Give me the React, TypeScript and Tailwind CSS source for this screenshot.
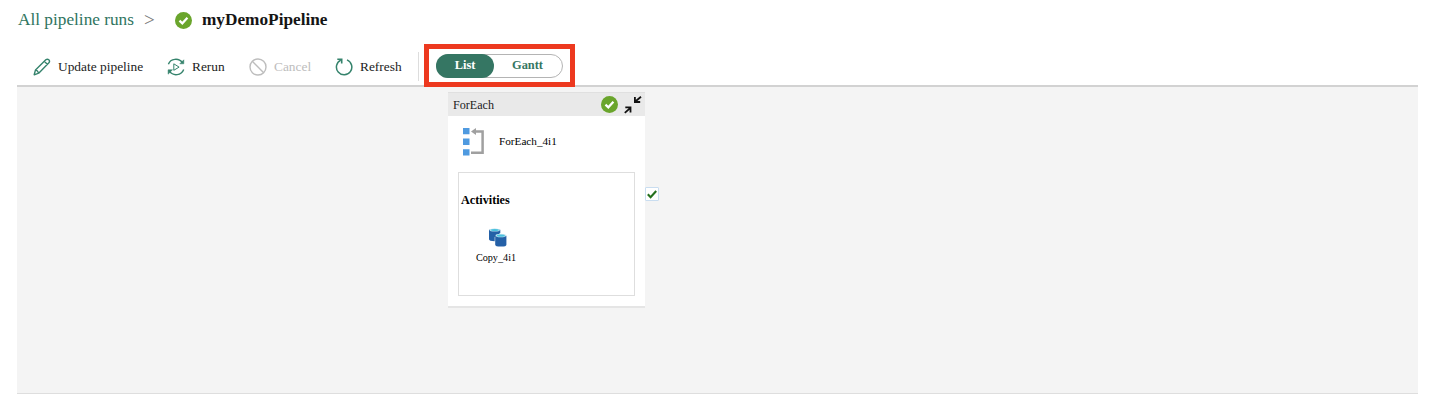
import type { ReactNode } from 'react';

function SuccessBadge({ size }: { size: number }) {
  return (
    <svg width={size} height={size} viewBox="0 0 16 16" className="shrink-0">
      <circle cx="8" cy="8" r="8" fill="#6aa52c" />
      <path d="M4.2 8.1l2.7 2.6 4.8-5.2" fill="none" stroke="#fff" strokeWidth="2.1" />
    </svg>
  );
}

function PencilIcon() {
  return (
    <svg width="18" height="18" viewBox="0 0 18 18" fill="none" stroke="#35836c" strokeWidth="1.4" strokeLinejoin="round">
      <path d="M1.2 16.8l1.3-4.9L12.8 1.8q1.6-1.3 3 0t.1 3L5.7 15.2zM2.5 11.9q2.3.5 3.2 3.3M11.3 3.3l3.2 3.1" />
    </svg>
  );
}

function RerunIcon() {
  return (
    <svg width="18" height="18" viewBox="0 0 18 18" fill="none" stroke="#35836c" strokeWidth="1.4">
      <path d="M1.4 6.2C3.5.4 11.8-.5 15.4 4.7M16.7 11.5C14.5 17.4 6.2 18.6 2.5 13.2" />
      <path d="M16.8 1.8v4h-4zM1.1 16.2v-4.4h4.4z" fill="#35836c" strokeWidth=".5" />
      <path d="M6.8 5.8v6.5l5.3-3.2z" strokeWidth="1" />
    </svg>
  );
}

function CancelIcon() {
  return (
    <svg width="18" height="18" viewBox="0 0 18 18" fill="none" stroke="#bdbdbd" strokeWidth="1.4">
      <circle cx="9" cy="9" r="8" />
      <path d="M3.3 3.3l11.4 11.4" />
    </svg>
  );
}

function RefreshIcon() {
  return (
    <svg width="18" height="18" viewBox="0 0 18 18" fill="none" stroke="#35836c" strokeWidth="1.5">
      <path d="M5.8 2.1A7.7 7.7 0 1 0 12 1.9" />
      <path d="M2.3 1.2h4.4v4.3" strokeWidth="1.6" />
    </svg>
  );
}

function CollapseIcon() {
  return (
    <svg width="18" height="18" viewBox="0 0 18 18" fill="none" stroke="#111" strokeWidth="1.8">
      <path d="M17 .7l-6 5M10.9 1v5h5.3M.8 16.8l5.6-5M1.3 11.4h5.2v5" />
    </svg>
  );
}

function ForEachIcon() {
  return (
    <svg width="21" height="28" viewBox="0 0 21 28">
      <path d="M0 0h6.5v6.3H0zM0 10.6h6.5v6.3H0zM0 21.3h6.5v6.3H0z" fill="#4f9ae0" />
      <path d="M11 3.5h8.6v21.2H8" fill="none" stroke="#a0a0a0" strokeWidth="2.5" />
      <path d="M8 3.5L13 0v7z" fill="#a0a0a0" />
    </svg>
  );
}

function CopyDataIcon() {
  return (
    <svg width="18" height="19" viewBox="0 0 18 19" className="ml-1">
      <path d="M0 1.8v9.5q0 1.8 5.7 1.9V9l5.6-4V1.8z" fill="#2460a7" />
      <ellipse cx="5.7" cy="1.9" rx="5.2" ry="1.5" fill="#b4deea" />
      <ellipse cx="5.8" cy="2" rx="3.8" ry="1" fill="#4bc1df" />
      <path d="M6.2 7.7v9q0 1.8 5.6 1.9t5.6-1.9v-9z" fill="#2460a7" />
      <ellipse cx="11.8" cy="7.5" rx="5.3" ry="1.8" fill="#c6e5ef" />
      <ellipse cx="11.8" cy="7.7" rx="4" ry="1.1" fill="#4bc1df" />
    </svg>
  );
}

function ToolButton({ icon, label, className }: { icon: ReactNode; label: string; className: string }) {
  return (
    <button className={`flex h-full shrink-0 items-center text-[13.4px] whitespace-nowrap ${className}`}>
      {icon}
      <span className="ml-[7px] leading-5">{label}</span>
    </button>
  );
}

export default function App() {
  return (
    <main className="h-[400px] w-[1434px] overflow-hidden bg-white font-['Liberation_Serif',serif] text-[#222]">
      <header className="flex h-10 items-center pl-[18px] text-[17.25px] leading-5">
        <a className="w-[126px] whitespace-nowrap text-[#30755f]">All pipeline runs</a>
        <span className="w-[10px] text-[19px] text-[#777]">&gt;</span>
        <span className="mr-[10px] ml-[21px]"><SuccessBadge size={17} /></span>
        <h1 className="font-bold text-[#151515]">myDemoPipeline</h1>
      </header>

      <div className="mx-[17px] flex h-[45px] items-start">
        <div className="flex h-[45px] w-[401px] items-center pt-2 pl-4">
          <ToolButton icon={<PencilIcon />} label="Update pipeline" className="w-[134px]" />
          <ToolButton icon={<RerunIcon />} label="Rerun" className="w-[82px]" />
          <ToolButton icon={<CancelIcon />} label="Cancel" className="w-[86px] text-[#bdbdbd]" />
          <ToolButton icon={<RefreshIcon />} label="Refresh" className="w-[70px]" />
        </div>
        <div className="mt-3 h-[29px] w-px bg-[#ddd]" />
        <div className="relative z-10 mt-1 ml-[5px] flex h-[43px] w-[151px] items-center justify-center border-[5px] border-[#ed391f] bg-white">
          <div className="flex h-6 w-[127px] rounded-full border border-[#b4b4b4] text-[12.4px] leading-[21px] font-bold">
            <button className="-my-px -ml-px h-6 w-[58px] rounded-full bg-[#357663] pb-px text-white">List</button>
            <button className="ml-[18px] h-[22px] text-[#357663]">Gantt</button>
          </div>
        </div>
      </div>

      <section className="mr-4 ml-[17px] flex h-[309px] items-start border-t-2 border-b border-t-[#d2d2d2] border-b-[#dedede] bg-[#f4f4f4] pt-[5px] pl-[431px]">
        <article className="h-[216px] w-[197px] shrink-0 border-b-2 border-[#e5e5e5] bg-white text-black">
          <div className="flex h-6 items-center border-t border-[#e0e0e0] bg-[#e9e9e9] pl-[5px] text-[12.1px] leading-4">
            <span className="w-[148px] text-[#222]">ForEach</span>
            <SuccessBadge size={17} />
            <span className="ml-[6px]"><CollapseIcon /></span>
          </div>
          <div className="flex h-[56px] items-start pt-3 pl-[15px]">
            <ForEachIcon />
            <span className="mt-[5px] ml-[15px] text-[11.2px] leading-4">ForEach_4i1</span>
          </div>
          <div className="ml-[10px] h-[124px] w-[177px] border border-[#dedede] pt-[19px] pl-[2px]">
            <h2 className="text-[12.2px] leading-4 font-bold">Activities</h2>
            <div className="mt-5 flex w-[70px] flex-col items-center">
              <CopyDataIcon />
              <span className="mt-[3px] text-[10.2px] leading-4">Copy_4i1</span>
            </div>
          </div>
        </article>
        <div className="mt-[95px] flex h-[14px] w-[14px] items-center justify-center rounded-[1px] border border-[#c9ddf0] bg-white">
          <svg width="10" height="9" viewBox="0 0 10 9" fill="none" stroke="#24701d" strokeWidth="2.1">
            <path d="M.8 4.3l2.8 2.9L9.2 1" />
          </svg>
        </div>
      </section>
    </main>
  );
}
